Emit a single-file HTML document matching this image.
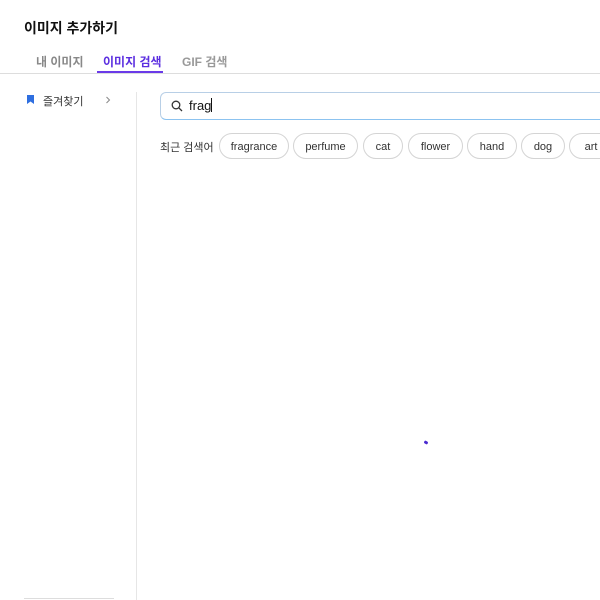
<!DOCTYPE html><html><head><style>
body{margin:0;width:600px;height:600px;overflow:hidden;background:#fff;font-family:"Liberation Sans","Noto Sans CJK KR",sans-serif;position:relative}
.a{position:absolute;white-space:nowrap}
.chip{position:absolute;top:133px;height:24px;border:1px solid #d4d4d4;border-radius:13px;font-size:11px;color:#333;line-height:26px;text-align:center;box-sizing:content-box}
</style></head><body>
<div class="a" style="left:24px;top:18px;font-size:14px;font-weight:bold;color:#111">이미지 추가하기</div>
<div class="a" style="left:36px;top:53px;font-size:12px;color:#888;font-weight:bold">내 이미지</div>
<div class="a" style="left:103px;top:53px;font-size:12px;color:#5b2ee0;font-weight:bold">이미지 검색</div>
<div class="a" style="left:182px;top:53px;font-size:12px;color:#999;font-weight:bold">GIF 검색</div>
<div class="a" style="left:0;top:73px;width:600px;height:1px;background:#ddd"></div>
<div class="a" style="left:97px;top:71px;width:66px;height:2px;background:#6a3ae8"></div>
<svg class="a" style="left:26px;top:94px" width="9" height="11"><path d="M1 1h7v9l-3.5-2.5L1 10z" fill="#2f6fe0"/></svg>
<div class="a" style="left:43px;top:93px;font-size:11px;color:#333">즐겨찾기</div>
<svg class="a" style="left:105px;top:96px" width="6" height="8"><path d="M1.5 1l3 3-3 3" fill="none" stroke="#888" stroke-width="1"/></svg>
<div class="a" style="left:136px;top:92px;width:1px;height:508px;background:#e6e6e6"></div>
<div class="a" style="left:24px;top:598px;width:90px;height:1px;background:#ddd"></div>
<div class="a" style="left:160px;top:92px;width:460px;height:26px;border:1px solid #b8cfe6;border-bottom-color:#8cc3f0;border-radius:6px"></div>
<svg class="a" style="left:171px;top:100px" width="12" height="12"><circle cx="5" cy="5" r="3.8" fill="none" stroke="#333" stroke-width="1.3"/><path d="M7.8 7.8L11 11" stroke="#333" stroke-width="1.3"/></svg>
<div class="a" style="left:189px;top:98px;font-size:13px;color:#111">frag<span style="display:inline-block;width:1px;height:14px;background:#111;vertical-align:-2px"></span></div>
<div class="a" style="left:160px;top:139px;font-size:11px;color:#333">최근 검색어</div>
<div class="chip" style="left:219px;width:68px">fragrance</div>
<div class="chip" style="left:293px;width:63px">perfume</div>
<div class="chip" style="left:363px;width:38px">cat</div>
<div class="chip" style="left:408px;width:53px">flower</div>
<div class="chip" style="left:467px;width:48px">hand</div>
<div class="chip" style="left:521px;width:42px">dog</div>
<div class="chip" style="left:569px;width:42px">art</div>
<div class="a" style="left:424px;top:441px;width:4px;height:3px;background:#4a2ad0;border-radius:2px;transform:rotate(30deg)"></div>
</body></html>
